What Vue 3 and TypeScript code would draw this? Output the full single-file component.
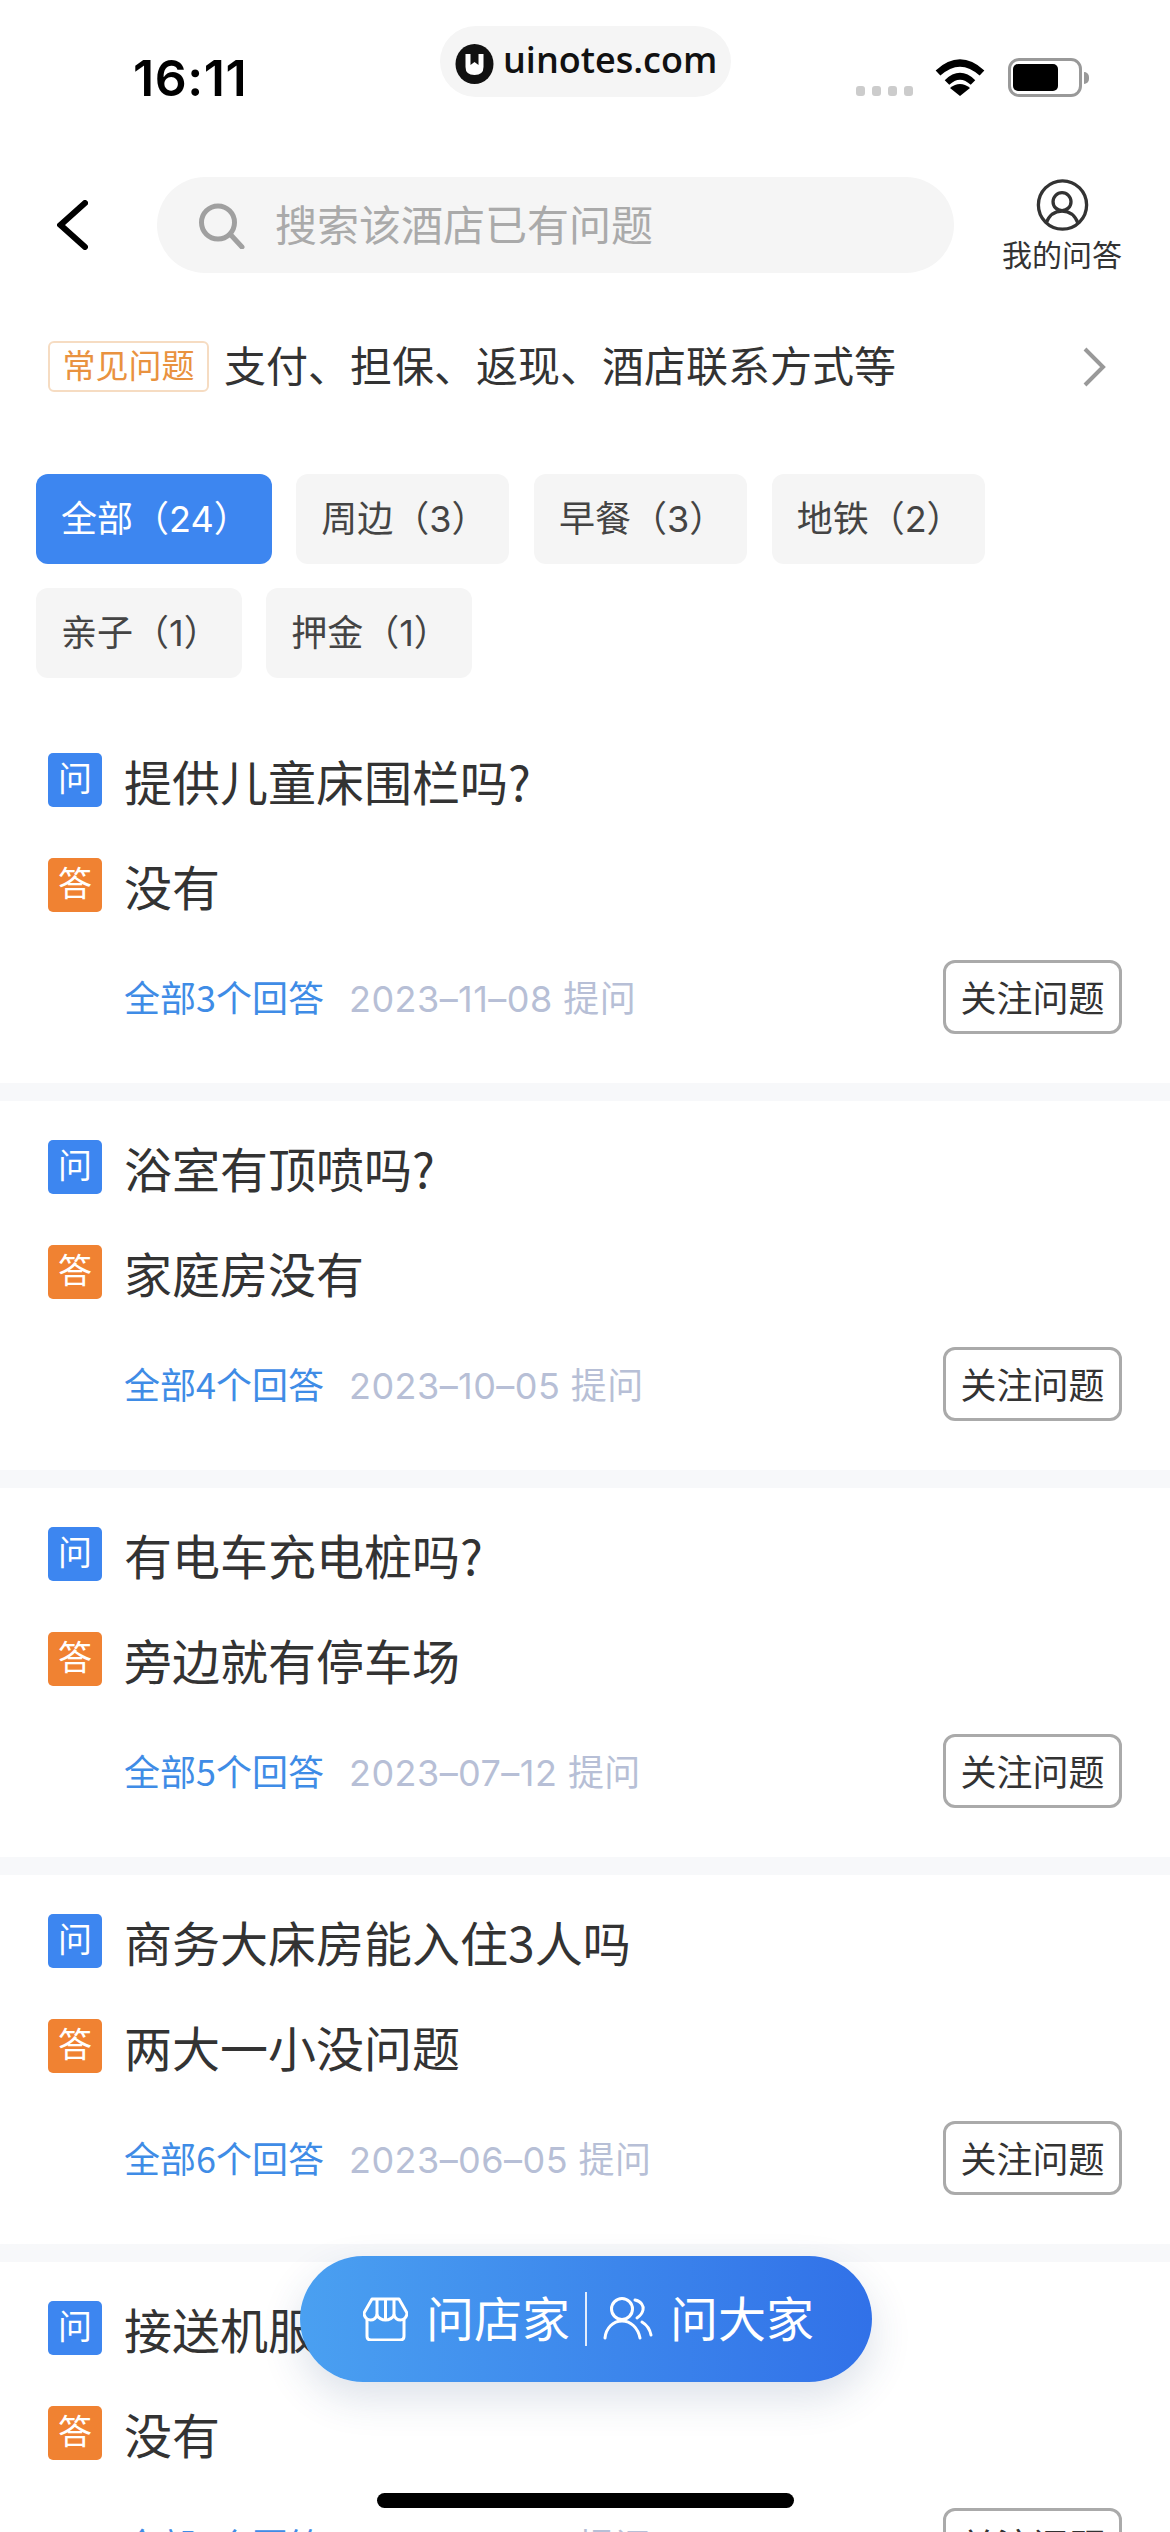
<script setup lang="ts">
interface Card { q: string; a: string; link: string; date: string }
const chips: string[] = ['全部（24）', '周边（3）', '早餐（3）', '地铁（2）', '亲子（1）', '押金（1）']
const cards: Card[] = [
  { q: '提供儿童床围栏吗?', a: '没有', link: '全部3个回答', date: '2023–11–08 提问' },
  { q: '浴室有顶喷吗?', a: '家庭房没有', link: '全部4个回答', date: '2023–10–05 提问' },
  { q: '有电车充电桩吗?', a: '旁边就有停车场', link: '全部5个回答', date: '2023–07–12 提问' },
  { q: '商务大床房能入住3人吗', a: '两大一小没问题', link: '全部6个回答', date: '2023–06–05 提问' },
  { q: '接送机服务吗?', a: '没有', link: '全部7个回答', date: '2023–05–20 提问' }
]
</script>

<template>
  <div class="page">
    <div class="status">
      <span class="time">16:11</span>
      <div class="brand">
        <svg class="logo" viewBox="0 0 38 40" width="39" height="40">
          <ellipse cx="19" cy="20" rx="19" ry="20" fill="#111" />
          <path d="M10 10H28V23Q28 31 19 31Q10 31 10 23Z" fill="#fff" />
          <path d="M15 9H23V21L19 18L15 21Z" fill="#111" />
        </svg>
        <span class="brand-text">uinotes.com</span>
      </div>
      <div class="dots"><i></i><i></i><i></i><i></i></div>
      <svg class="wifi" viewBox="0 0 50 37" width="50" height="37">
        <path d="M3 14Q25 -6 47 14" fill="none" stroke="#000" stroke-width="7" />
        <path d="M12 23.500Q25 11 38 23.500" fill="none" stroke="#000" stroke-width="6.500" />
        <path d="M25 37L15 29Q25 21 35 29Z" fill="#000" />
      </svg>
      <div class="battery"><div class="cell"><b></b></div><span class="nub"></span></div>
    </div>

    <div class="header">
      <svg class="back" viewBox="0 0 31 50" width="31" height="50">
        <path d="M28 3L3.500 25L28 47" fill="none" stroke="#000" stroke-width="6" stroke-linecap="round" stroke-linejoin="miter" />
      </svg>
      <div class="search">
        <svg viewBox="0 0 46 46" width="46" height="46">
          <circle cx="19" cy="19.500" r="16.500" fill="none" stroke="#a0a0a0" stroke-width="5" />
          <path d="M31 31L43 44" fill="none" stroke="#a0a0a0" stroke-width="5" stroke-linecap="round" />
        </svg>
        <span>搜索该酒店已有问题</span>
      </div>
      <div class="mine">
        <svg viewBox="0 0 55 55" width="55" height="55">
          <circle cx="27.500" cy="27.500" r="25.500" fill="none" stroke="#333" stroke-width="3.500" />
          <circle cx="27" cy="24" r="9.500" fill="none" stroke="#333" stroke-width="3.500" />
          <path d="M10 47C13 39 19 34 27 34C35 34 41 39 44 47" fill="none" stroke="#333" stroke-width="3.500" />
        </svg>
        <span>我的问答</span>
      </div>
    </div>

    <div class="faq">
      <span class="tag">常见问题</span>
      <span class="faq-text">支付、担保、返现、酒店联系方式等</span>
      <svg class="more" viewBox="0 0 24 40" width="24" height="40">
        <path d="M3 2L21 20L3 38" fill="none" stroke="#999" stroke-width="4" />
      </svg>
    </div>

    <div class="chips">
      <span v-for="(c, i) in chips" :key="c" class="chip" :class="{ on: i === 0 }">{{ c }}</span>
    </div>

    <div class="list">
      <section v-for="c in cards" :key="c.link" class="card">
        <div class="line">
          <span class="badge q">问</span>
          <span class="txt">{{ c.q }}</span>
        </div>
        <div class="line second">
          <span class="badge a">答</span>
          <span class="txt">{{ c.a }}</span>
        </div>
        <div class="meta">
          <span class="link">{{ c.link }}</span>
          <span class="date">{{ c.date }}</span>
          <span class="follow">关注问题</span>
        </div>
      </section>
    </div>

    <div class="fab">
      <svg class="ico-store" viewBox="0 0 45 44" width="45" height="44">
        <path d="M9 2H36L44 16C44 20 41 23 37.500 23C34 23 32 21 31 18C30 21 26 23 22.500 23C19 23 15 21 14 18C13 21 11 23 7.500 23C4 23 1 20 1 16Z" fill="none" stroke="#fff" stroke-width="3" stroke-linejoin="round" />
        <path d="M14 2V18M22.500 2V23M31 2V18" fill="none" stroke="#fff" stroke-width="3" />
        <path d="M4 21V39Q4 43 8 43H37Q41 43 41 39V21" fill="none" stroke="#fff" stroke-width="3" />
      </svg>
      <span class="fab-text t1">问店家</span>
      <i class="sep"></i>
      <svg class="ico-people" viewBox="0 0 50 44" width="50" height="44">
        <circle cx="19" cy="12" r="10.500" fill="none" stroke="#fff" stroke-width="3" />
        <path d="M2 41C3 31 10 24 19 24C28 24 35 31 37 41" fill="none" stroke="#fff" stroke-width="3" stroke-linecap="round" />
        <path d="M32 3C38 4 41 9 40 13C39 17 37 19 34 21M39 25C44 28 47 33 48 38" fill="none" stroke="#fff" stroke-width="3" stroke-linecap="round" />
      </svg>
      <span class="fab-text t2">问大家</span>
    </div>

    <div class="home"></div>
  </div>
</template>

<style scoped>
.page {
  position: relative;
  width: 1170px;
  height: 2532px;
  overflow: hidden;
  background: #fff;
  font-family: "Noto Sans CJK SC", "Noto Sans", sans-serif;
  color: #333;
}
.status {
  display: flex;
  align-items: flex-start;
  height: 120px;
  padding-left: 133px;
  box-sizing: border-box;
}
.time {
  width: 113px;
  margin-top: 48px;
  font-family: Inter, "Liberation Sans", sans-serif;
  font-size: 50px;
  line-height: 60px;
  font-weight: 600;
  letter-spacing: 0.6px;
  color: #000;
  white-space: nowrap;
}
.brand {
  display: flex;
  align-items: center;
  width: 291px;
  height: 71px;
  margin: 26px 0 0 194px;
  padding-left: 15px;
  box-sizing: border-box;
  border-radius: 36px;
  background: #f5f5f5;
}
.logo { flex: none; margin-top: 4px; }
.brand-text {
  margin: -3px 0 0 9px;
  font-family: "Open Sans", sans-serif;
  font-size: 36px;
  font-weight: 600;
  line-height: 50px;
  color: #111;
}
.dots {
  display: flex;
  gap: 7px;
  margin: 86px 0 0 125px;
}
.dots i {
  display: block;
  width: 9px;
  height: 10px;
  border-radius: 3px;
  background: #ccc;
}
.wifi { margin: 59px 0 0 22px; }
.battery {
  display: flex;
  align-items: center;
  margin: 58px 0 0 23px;
}
.cell {
  width: 74px;
  height: 39px;
  padding: 3px 0 0 2px;
  box-sizing: border-box;
  border: 3px solid #999;
  border-radius: 11px;
}
.cell b {
  display: block;
  width: 45px;
  height: 27px;
  border-radius: 5px;
  background: #000;
}
.nub {
  width: 5px;
  height: 12px;
  margin-left: 2px;
  border-radius: 0 6px 6px 0;
  background: #999;
}
.header {
  display: flex;
  height: 96px;
  margin-top: 57px;
}
.back { margin: 23px 0 0 57px; }
.search {
  display: flex;
  align-items: center;
  width: 797px;
  height: 96px;
  margin-left: 69px;
  padding-left: 42px;
  box-sizing: border-box;
  border-radius: 48px;
  background: #f5f5f5;
  font-size: 42px;
  color: #aaa;
}
.search span { margin: 0 0 6px 30px; }
.search svg { margin-top: 2px; }
.mine {
  display: flex;
  flex-direction: column;
  align-items: center;
  width: 120px;
  margin: 2px 0 0 48px;
  font-size: 30px;
  line-height: 40px;
  color: #333;
  white-space: nowrap;
}
.mine span { margin-top: 2px; }
.faq {
  display: flex;
  align-items: center;
  height: 51px;
  margin-top: 68px;
  padding: 0 64px 0 48px;
}
.tag {
  width: 161px;
  height: 51px;
  box-sizing: border-box;
  border: 2.500px solid #f6dcc2;
  border-radius: 6px;
  font-size: 33px;
  line-height: 42px;
  text-align: center;
  color: #e9923f;
}
.faq-text {
  margin: 0 0 6px 15px;
  font-size: 42px;
  color: #333;
  white-space: nowrap;
}
.more { margin-left: auto; }
.chips {
  display: flex;
  flex-wrap: wrap;
  gap: 24px 24.500px;
  margin-top: 82px;
  padding: 0 36px;
}
.chip {
  height: 90px;
  padding: 0 22px 0 25px;
  border-radius: 12px;
  background: #f5f5f5;
  font-family: Inter, "Noto Sans CJK SC", sans-serif;
  font-size: 36px;
  line-height: 90px;
  color: #444;
  white-space: nowrap;
}
.chip.on {
  background: #3d86f0;
  color: #fff;
}
.list { margin-top: 36px; }
.card {
  padding: 39px 0 49px;
  border-bottom: 18px solid #f7f8fa;
}
.line {
  display: flex;
  align-items: center;
  height: 54px;
  padding-left: 48px;
}
.line.second { margin-top: 51px; }
.badge {
  width: 54px;
  height: 54px;
  border-radius: 5px;
  font-size: 34px;
  line-height: 48px;
  text-align: center;
  color: #fff;
}
.badge.q { background: #3d86f0; }
.badge.a { background: #f08232; }
.txt {
  margin-left: 22px;
  font-size: 48px;
  line-height: 60px;
  color: #333;
  white-space: nowrap;
}
.meta {
  display: flex;
  align-items: center;
  height: 74px;
  margin-top: 48px;
  padding: 0 48px 0 124px;
  font-size: 36px;
}
.link {
  margin-bottom: 3px;
  color: #3f8ce6;
}
.date {
  margin: 0 0 3px 25px;
  font-family: Inter, "Noto Sans CJK SC", sans-serif;
  letter-spacing: 0.45px;
  color: #b7bfd6;
}
.follow {
  width: 179px;
  height: 74px;
  margin-left: auto;
  box-sizing: border-box;
  border: 3px solid #aaa;
  border-radius: 12px;
  line-height: 66px;
  text-align: center;
  color: #333;
}
.fab {
  position: absolute;
  left: 300px;
  top: 2256px;
  display: flex;
  align-items: center;
  width: 572px;
  height: 126px;
  padding-left: 63px;
  box-sizing: border-box;
  border-radius: 63px;
  background: linear-gradient(90deg, #4aa0f1, #3171e8);
  box-shadow: 0 16px 40px rgba(40, 70, 120, 0.16);
  color: #fff;
}
.fab-text {
  margin-bottom: 6px;
  font-size: 48px;
  line-height: 60px;
  white-space: nowrap;
}
.t1 { margin-left: 18px; }
.sep {
  width: 2px;
  height: 54px;
  margin-left: 15px;
  background: rgba(255, 255, 255, 0.85);
}
.ico-people { margin-left: 16px; }
.t2 { margin-left: 17px; }
.home {
  position: absolute;
  left: 377px;
  top: 2493px;
  width: 417px;
  height: 15px;
  border-radius: 8px;
  background: #000;
}
</style>
